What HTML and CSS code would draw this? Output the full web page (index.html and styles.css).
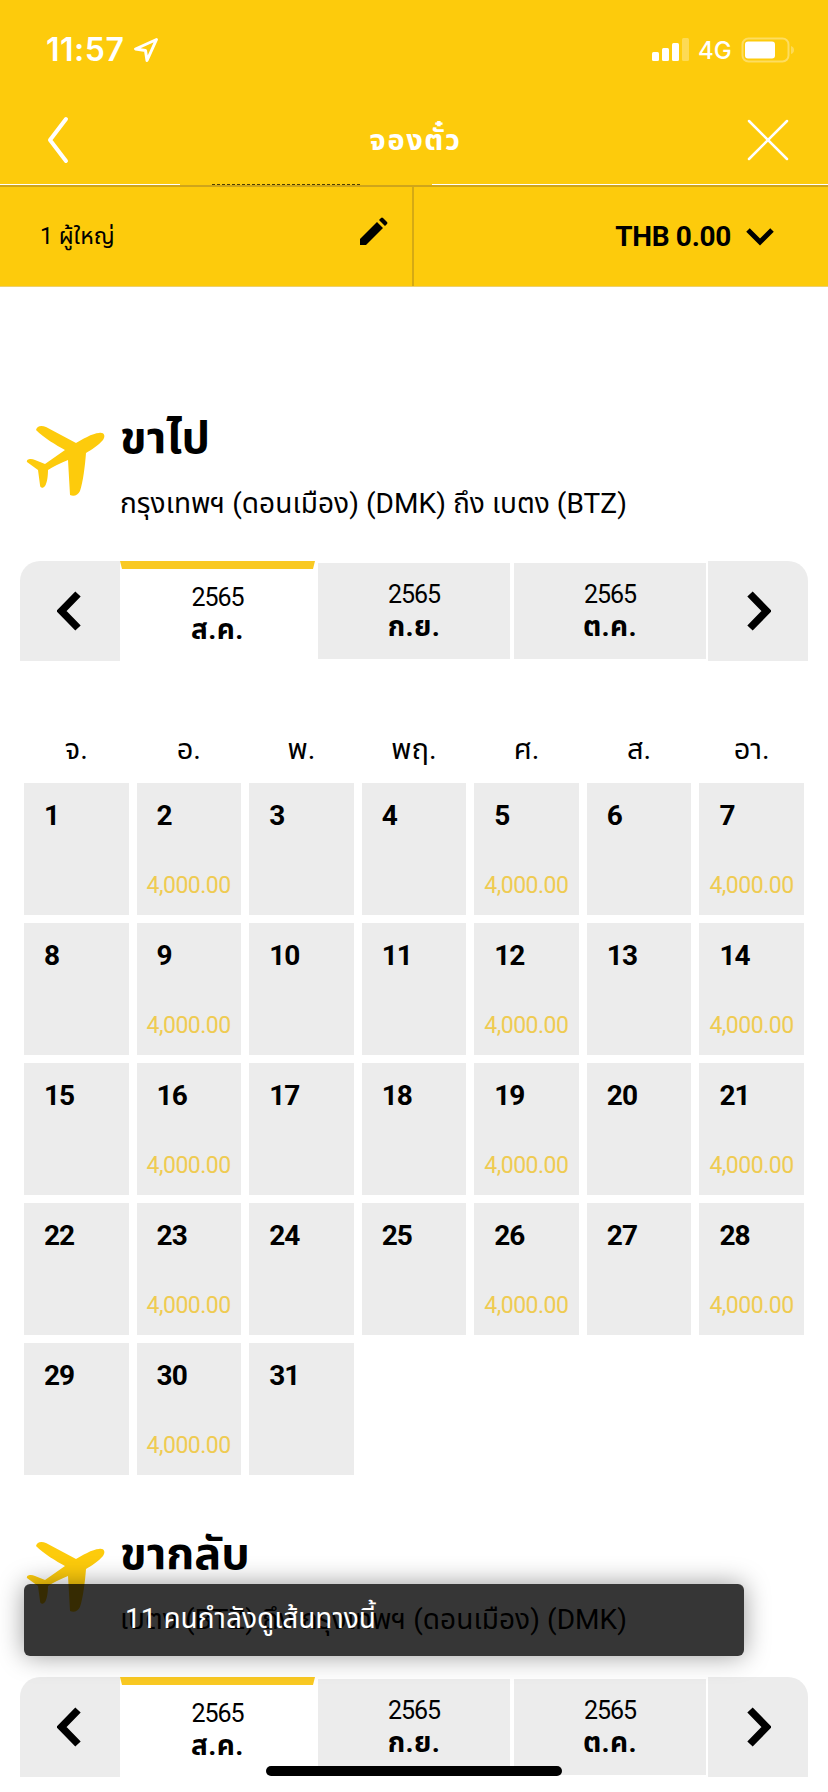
FILE: index.html
```html
<!DOCTYPE html>
<html lang="th">
<head>
  <meta charset="UTF-8" />
  <meta name="viewport" content="width=device-width,initial-scale=1.0" />
  <title>จองตั๋ว</title>
  <link rel="stylesheet" href="styles.css">
</head>
<body>
  <svg style="display:none">
    <symbol id="plane" viewBox="0 0 80 72">
      <path d="M10 5C11 1 15 0 20 2L50 18C55 15 67 8 73 8C78 7 80 11 77 15C73 20 65 25 60 28C59 41 57 57 54 66C52 70 48 72 44 70L42 35C34 38 27 42 22 45C22 51 21 58 19 61C17 64 14 63 14 60L12 45L1 37C0 34 5 33 9 35L19 39L39 25C30 20 18 13 10 5Z"/>
    </symbol>
    <symbol id="left" viewBox="0 0 24 40"><path d="M21 3L4.500 20L21 37"/></symbol>
    <symbol id="right" viewBox="0 0 24 40"><path d="M3 3L19.500 20L3 37"/></symbol>
  </svg>

  <header class="top">
    <div class="status">
      <span class="clock">11:57</span>
      <svg class="location" viewBox="0 0 26 26"><path d="M23.5 2.5L2.5 12L12.5 13.5L14 23.5Z"/></svg>
      <svg class="signal" viewBox="0 0 38 24">
        <rect x="0" y="14" width="7" height="9" rx="1.5"/>
        <rect x="10" y="10" width="7" height="13" rx="1.5"/>
        <rect x="20" y="5" width="7" height="18" rx="1.5"/>
        <rect class="dim" x="30" y="0" width="7" height="23" rx="1.5"/>
      </svg>
      <span class="network">4G</span>
      <svg class="battery" viewBox="0 0 54 26">
        <rect class="shell" x="1.5" y="1.5" width="46" height="23" rx="6"/>
        <rect x="4" y="4.500" width="30" height="17" rx="3"/>
        <path class="dim" d="M50 9Q53 10 53 13Q53 16 50 17Z"/>
      </svg>
    </div>
    <div class="nav">
      <svg class="back" viewBox="0 0 22 48"><path d="M19 3L3 24L19 45"/></svg>
      <h1>จองตั๋ว</h1>
      <svg class="close" viewBox="0 0 42 42"><path d="M2 2L40 40M40 2L2 40"/></svg>
    </div>
    <div class="edge"><i></i><b></b><i class="wide"></i></div>
  </header>

  <div class="summary">
    <div class="pax">
      <span class="pax-text">1 ผู้ใหญ่</span>
      <svg class="pencil" viewBox="0 0 28 28"><path d="M0 22L17 5L23 11L6 28H0ZM19 3L21 1Q22 0 23 1L27 5Q28 6 27 7L25 9Z"/></svg>
    </div>
    <div class="total">
      <span class="total-text">THB 0.00</span>
      <svg class="down" viewBox="0 0 28 18"><path d="M2 2L14 14L26 2"/></svg>
    </div>
  </div>

  <main>
    <section class="trip">
      <div class="trip-head">
        <svg class="plane"><use href="#plane"/></svg>
        <div>
          <h2>ขาไป</h2>
          <p class="route">กรุงเทพฯ (ดอนเมือง) (DMK) ถึง เบตง (BTZ)</p>
        </div>
      </div>
      <div class="months">
        <button class="arrow prev"><svg><use href="#left"/></svg></button>
        <div class="month active"><span>2565</span><strong>ส.ค.</strong></div>
        <div class="month"><span>2565</span><strong>ก.ย.</strong></div>
        <div class="month"><span>2565</span><strong>ต.ค.</strong></div>
        <button class="arrow next"><svg><use href="#right"/></svg></button>
      </div>
      <div class="week">
        <span>จ.</span><span>อ.</span><span>พ.</span><span>พฤ.</span><span>ศ.</span><span>ส.</span><span>อา.</span>
      </div>
      <div class="days" id="days"></div>
    </section>

    <section class="trip return">
      <div class="trip-head">
        <svg class="plane"><use href="#plane"/></svg>
        <div>
          <h2>ขากลับ</h2>
          <p class="route">เบตง (BTZ) ถึง กรุงเทพฯ (ดอนเมือง) (DMK)</p>
        </div>
      </div>
      <div class="months">
        <button class="arrow prev"><svg><use href="#left"/></svg></button>
        <div class="month active"><span>2565</span><strong>ส.ค.</strong></div>
        <div class="month"><span>2565</span><strong>ก.ย.</strong></div>
        <div class="month"><span>2565</span><strong>ต.ค.</strong></div>
        <button class="arrow next"><svg><use href="#right"/></svg></button>
      </div>
    </section>
  </main>

  <div class="toast"><span>11 คนกำลังดูเส้นทางนี้</span></div>
  <div class="home-bar"></div>

  <script>
    // flights leave on Tuesday, Friday and Sunday
    const flightDays = [2, 5, 0];
    let html = "";
    for (let d = 1; d <= 31; d++) {
      const price = flightDays.includes(d % 7) ? "<small>4,000.00</small>" : "";
      html += `<div class="day"><b>${d}</b>${price}</div>`;
    }
    document.getElementById("days").innerHTML = html;
  </script>
</body>
</html>
```
FILE: styles.css
```css
* {
  box-sizing: border-box;
}

body {
  margin: 0;
  height: 1792px;
  overflow: hidden;
  position: relative;
  background: #fff;
  color: #000;
  font-family: Roboto, "Noto Sans Thai", "Noto Sans", sans-serif;
}

h1, h2, p {
  margin: 0;
}

svg {
  display: block;
  flex: none;
}

.top {
  height: 185px;
  background: #fdcb0c;
  color: #fff;
}

.status {
  height: 98px;
  padding: 2px 33px 0 46px;
  display: flex;
  align-items: center;
}

.clock {
  font: 600 32px/1 Inter, sans-serif;
  letter-spacing: 0.5px;
  width: 87px;
}

.location {
  width: 26px;
  height: 26px;
  fill: none;
  stroke: #fff;
  stroke-width: 3;
  stroke-linejoin: round;
}

.signal {
  width: 38px;
  height: 24px;
  margin-left: auto;
  fill: #fff;
}

.dim {
  opacity: 0.3;
}

.network {
  font: 500 24px/1 Inter, sans-serif;
  margin: 2px 0 0 8px;
  width: 43px;
}

.battery {
  width: 54px;
  height: 26px;
  fill: #fff;
}

.battery .shell {
  fill: none;
  stroke: #fff;
  stroke-width: 2;
  opacity: 0.35;
}

.nav {
  height: 85px;
  padding: 0 39px 2px 47px;
  display: flex;
  align-items: center;
  justify-content: space-between;
}

.nav svg {
  fill: none;
  stroke: #fff;
  stroke-linecap: round;
  stroke-linejoin: round;
}

.nav h1 {
  margin-left: 15px;
  font-size: 29px;
  line-height: 40px;
  letter-spacing: 1.6px;
}

.back {
  width: 22px;
  height: 48px;
  stroke-width: 4;
}

.close {
  width: 42px;
  height: 42px;
  stroke-width: 2.5;
}

/* strip of the page peeking out under the header */
.edge {
  display: flex;
  height: 2px;
  padding-top: 1px;
}

.edge i {
  width: 180px;
  background: #fff;
}

.edge b {
  width: 148px;
  margin: 0 72px 0 32px;
  border-top: 1px dashed #4d3d00;
}

.edge .wide {
  width: 396px;
}

.summary {
  display: flex;
  height: 102px;
  background: #fdcb0c;
  border-top: 2px solid #cfa51a;
  border-bottom: 1px solid #ecd070;
}

.pax, .total {
  display: flex;
  align-items: center;
}

.pax {
  width: 414px;
  padding: 0 24px 0 40px;
  justify-content: space-between;
  border-right: 2px solid #d5aa14;
}

.pax-text {
  font-size: 23px;
}

.pencil {
  width: 28px;
  height: 28px;
  margin-bottom: 11px;
}

.total {
  flex: 1;
  justify-content: flex-end;
  padding-right: 54px;
}

.total-text {
  font-size: 28px;
  font-weight: 700;
  letter-spacing: -0.3px;
}

.down {
  width: 28px;
  height: 18px;
  margin-left: 15px;
  fill: none;
  stroke: #000;
  stroke-width: 5;
}

main {
  padding: 113px 20px 0;
}

.trip {
  height: 1116px;
}

.trip.return {
  height: 276px;
}

.trip-head {
  display: flex;
  height: 161px;
}

.plane {
  width: 80px;
  height: 72px;
  margin: 25px 14px 0 6px;
  fill: #fdcb0c;
}

h2 {
  height: 76px;
  font-size: 45px;
  line-height: 76px;
  white-space: nowrap;
}

.route {
  font-size: 28px;
  line-height: 55px;
  letter-spacing: 0.05px;
  white-space: nowrap;
}

.months {
  display: grid;
  grid-template-columns: 100px 198px 196px 194px 100px;
  height: 100px;
}

.arrow {
  display: flex;
  align-items: center;
  justify-content: center;
  width: 100px;
  height: 100px;
  padding: 0;
  border: 0;
  background: #ececec;
}

.prev {
  border-top-left-radius: 20px;
}

.next {
  border-top-right-radius: 20px;
}

.arrow svg {
  width: 24px;
  height: 40px;
  fill: none;
  stroke: #000;
  stroke-width: 7.5;
}

.prev svg {
  margin-right: 2px;
}

.next svg {
  margin-left: 2px;
}

.month {
  display: flex;
  flex-direction: column;
  align-items: center;
  margin: 2px 4px 2px 0;
  padding-top: 15px;
  background: #ececec;
}

.month:nth-child(4) {
  margin-right: 2px;
}

.month.active {
  margin: 0 3px 0 0;
  padding-top: 12px;
  background: #fff;
  border: solid #fff;
  border-width: 8px 2px 0;
  border-top-color: #f9c923;
}

.month span {
  font-size: 25px;
  line-height: 34px;
  letter-spacing: -1px;
}

.month strong {
  font-size: 28px;
  line-height: 30px;
  letter-spacing: 0.4px;
}

.week, .days {
  display: grid;
  grid-template-columns: repeat(7, 1fr);
  column-gap: 8px;
  margin: 0 4px;
}

.week {
  height: 122px;
  padding-top: 68px;
  font-size: 29px;
  line-height: 40px;
  text-align: center;
}

.days {
  row-gap: 8px;
}

.day {
  height: 132px;
  padding: 16px 10px 0;
  display: flex;
  flex-direction: column;
  background: #ececec;
}

.day b {
  padding-left: 10px;
  font-size: 28px;
  line-height: 34px;
  letter-spacing: -1px;
}

.day small {
  margin-top: 36px;
  font-size: 23px;
  line-height: 34px;
  letter-spacing: -0.5px;
  color: #efcb52;
}

.toast {
  position: absolute;
  left: 24px;
  top: 1584px;
  width: 720px;
  height: 72px;
  padding-left: 101px;
  border-radius: 6px;
  background: rgba(0, 0, 0, 0.79);
  box-shadow: 0 0 26px rgba(0, 0, 0, 0.4);
  color: #fff;
  font-size: 28px;
  line-height: 70px;
  white-space: nowrap;
}

.home-bar {
  position: absolute;
  left: 266px;
  top: 1766px;
  width: 296px;
  height: 10px;
  border-radius: 5px;
  background: #000;
}
```
